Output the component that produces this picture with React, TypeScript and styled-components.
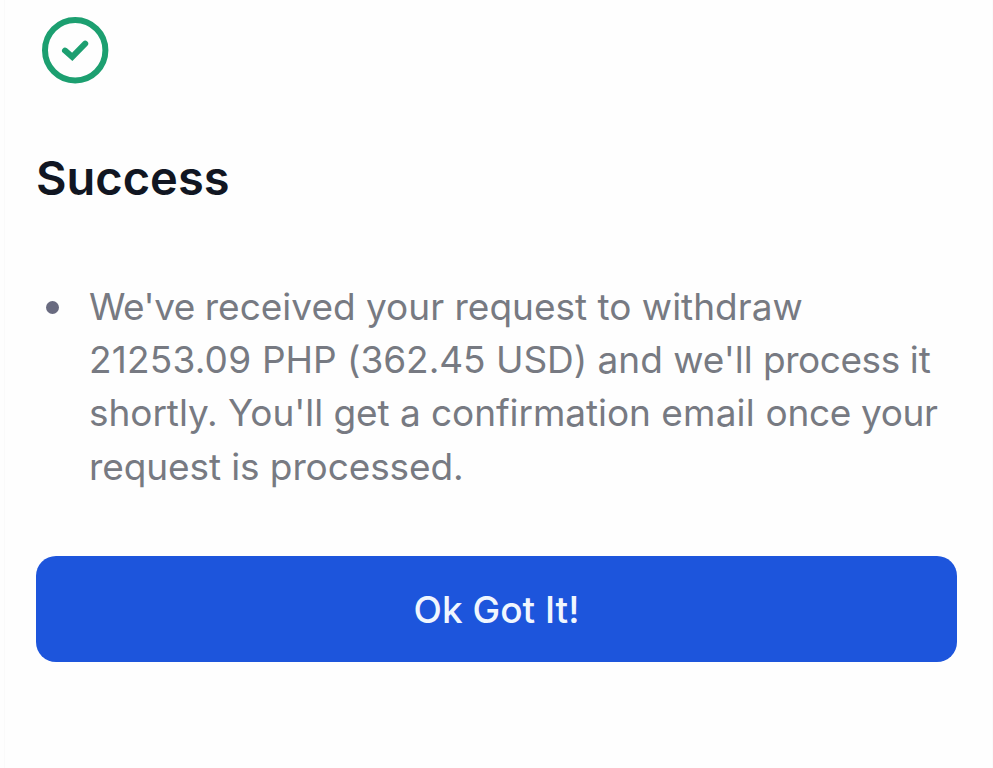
import React from "react";
import styled, { createGlobalStyle } from "styled-components";

const GlobalStyle = createGlobalStyle`
  * { box-sizing: border-box; }
  body { margin: 0; background: #fefefe; font-family: Inter, sans-serif; }
`;

const Dialog = styled.main`
  display: flex;
  flex-direction: column;
  width: 989px;
  height: 768px;
  margin-left: 4px;
  padding: 15px 31px 0;
  background: #fefefe;
  border-left: 1px solid #fafafa;
  border-right: 1px solid #fbfbfb;
`;

const StatusIcon = styled.svg`
  display: block;
  width: 70px;
  height: 70px;
  margin-left: 4px;
`;

const Title = styled.h1`
  margin: 65px 0 0;
  font-size: 47px;
  line-height: 56px;
  font-weight: 600;
  color: #111622;
  white-space: nowrap;
`;

const Messages = styled.ul`
  margin: 74px 0 0;
  padding: 0;
  list-style: none;
`;

const Message = styled.li`
  display: flex;
  align-items: flex-start;
`;

const Bullet = styled.span`
  flex: none;
  width: 13px;
  height: 13px;
  margin: 21px 30px 0 10px;
  border-radius: 50%;
  background: #696b80;
`;

const MessageText = styled.div`
  font-size: 37px;
  line-height: 53.2px;
  color: #777a82;
`;

const Line = styled.span`
  display: block;
  width: max-content;
  white-space: pre;
`;

const Run = styled.span<{ $tracking: number }>`
  letter-spacing: ${(p) => p.$tracking}px;
`;

const ConfirmButton = styled.button`
  width: 921px;
  height: 106px;
  margin-top: 63px;
  padding: 1px 0 0;
  border: 0;
  border-radius: 20px;
  background: #1d55dc;
  color: #f0f6fe;
  font: 500 37px/105px Inter, sans-serif;
`;

const lines = [
  [
    { text: "We've ", tracking: -0.5 },
    { text: "received your request to withdraw", tracking: 0 },
  ],
  [
    { text: "21253.09 ", tracking: 0.2 },
    { text: "PHP (362.45 USD) and we'll ", tracking: -0.04 },
    { text: "process ", tracking: -0.45 },
    { text: "it", tracking: 0 },
  ],
  [
    { text: "shortly. You'll get a confirmation ", tracking: -0.06 },
    { text: "email ", tracking: 0.2 },
    { text: "once your", tracking: -0.35 },
  ],
  [{ text: "request is processed.", tracking: -0.1 }],
];

export default function App() {
  return (
    <>
      <GlobalStyle />
      <Dialog>
        <StatusIcon viewBox="0 0 70 70" fill="none" stroke="#1c9f70" strokeLinecap="round">
          <circle cx="35.2" cy="35.2" r="30.2" strokeWidth="6" />
          <path d="M25 35.6l7.2 6.2L45.2 28.6" strokeWidth="6" strokeLinejoin="miter" />
        </StatusIcon>
        <Title>Success</Title>
        <Messages>
          <Message>
            <Bullet />
            <MessageText>
              {lines.map((runs, i) => (
                <Line key={i}>
                  {runs.map((run) => (
                    <Run key={run.text} $tracking={run.tracking}>{run.text}</Run>
                  ))}
                </Line>
              ))}
            </MessageText>
          </Message>
        </Messages>
        <ConfirmButton>Ok Got It!</ConfirmButton>
      </Dialog>
    </>
  );
}
